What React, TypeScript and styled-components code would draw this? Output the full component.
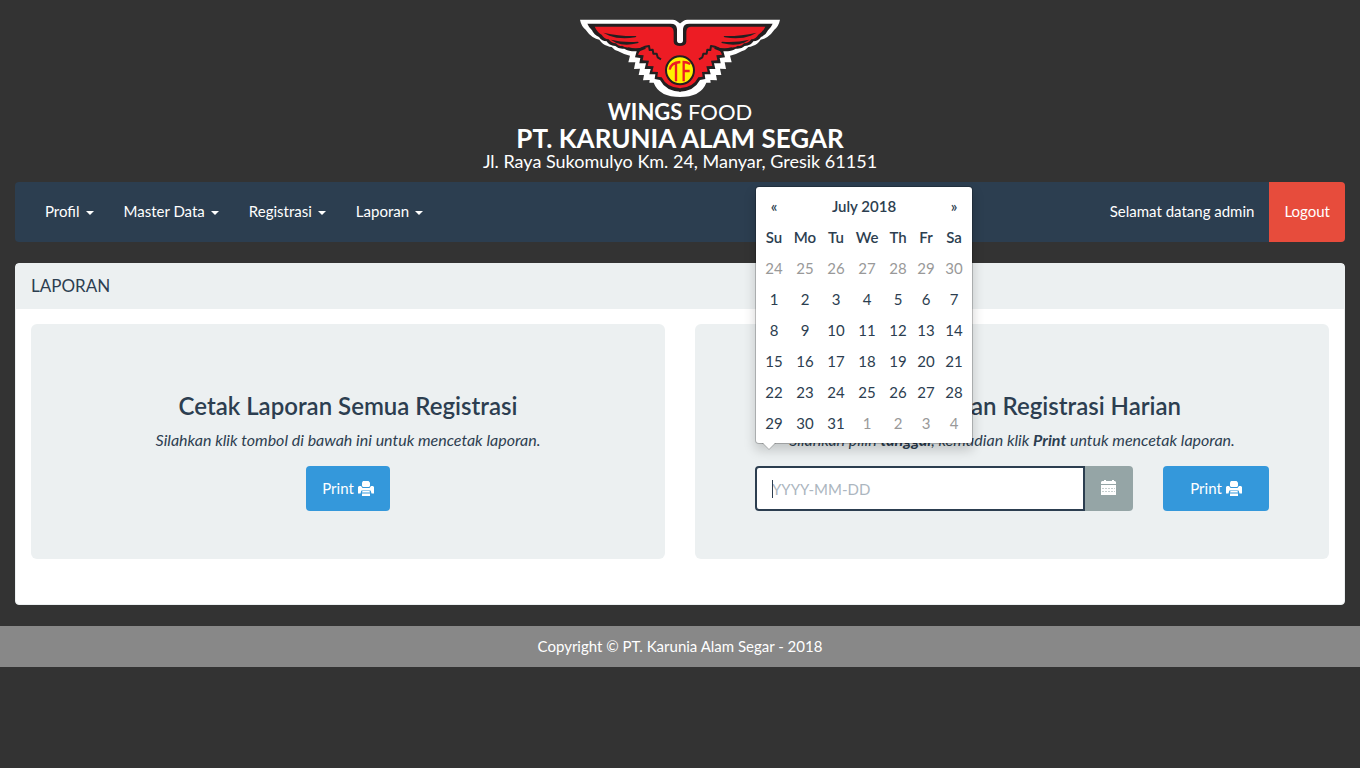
import React from "react";
import styled, { createGlobalStyle } from "styled-components";

const navy = "#2c3e50";
const pale = "#ecf0f1";

const GlobalStyle = createGlobalStyle`
  *, *::before, *::after { box-sizing: border-box; }
  body {
    margin: 0;
    background: #333333;
    color: ${navy};
    font-family: Lato, "Liberation Sans", sans-serif;
    font-size: 15px;
    line-height: 21px;
  }
`;

const Container = styled.div`
  padding: 0 15px;
`;

const Header = styled.header`
  display: flex;
  flex-direction: column;
  align-items: center;
  padding: 19px 0 11px;
  color: #ffffff;
  text-align: center;
`;

const Brand = styled.div`
  font-size: 22px;
  line-height: 29px;
`;

const Company = styled.h1`
  margin: 0;
  font-size: 26px;
  font-weight: 700;
  line-height: 25px;
`;

const Address = styled.p`
  margin: 0;
  font-size: 18px;
  line-height: 20px;
`;

const Navbar = styled.nav`
  display: flex;
  justify-content: space-between;
  margin-bottom: 21px;
  padding-left: 15px;
  border-radius: 4px;
  background: ${navy};
  overflow: hidden;
`;

const NavGroup = styled.ul`
  display: flex;
  margin: 0;
  padding: 0;
  list-style: none;
`;

const NavLink = styled.a<{ $danger?: boolean }>`
  display: flex;
  align-items: center;
  gap: 6px;
  height: 60px;
  padding: 0 15px 2px;
  background: ${(p) => (p.$danger ? "#e74c3c" : "transparent")};
  color: #ffffff;
  text-decoration: none;
`;

const Caret = styled.span`
  margin-top: 4px;
  border-top: 4px solid currentColor;
  border-right: 4px solid transparent;
  border-left: 4px solid transparent;
`;

const Panel = styled.section`
  margin-bottom: 21px;
  border: 1px solid ${pale};
  border-radius: 4px;
  background: #ffffff;
`;

const PanelTitle = styled.h2`
  margin: 0;
  padding: 11px 15px 13px;
  background: ${pale};
  font-size: 17px;
  font-weight: 400;
  line-height: 21px;
`;

const PanelBody = styled.div`
  display: grid;
  grid-template-columns: repeat(2, minmax(0, 1fr));
  gap: 30px;
  padding: 15px 15px 45px;
`;

const Card = styled.section`
  padding: 69px 60px 48px;
  border-radius: 6px;
  background: ${pale};
  text-align: center;
`;

const CardTitle = styled.h3`
  margin: 0 0 10px;
  font-size: 24px;
  font-weight: 600;
  line-height: 26px;
`;

const Hint = styled.p`
  margin: 0 0 16px;
  font-size: 16px;
  font-style: italic;
`;

const PrintButton = styled.button`
  display: inline-flex;
  align-items: center;
  justify-content: center;
  gap: 4px;
  height: 45px;
  padding: 0 16px;
  border: 0;
  border-radius: 4px;
  background: #3498db;
  color: #ffffff;
  font: inherit;
  vertical-align: top;
`;

const FormRow = styled.form`
  display: grid;
  grid-template-columns: repeat(4, minmax(0, 1fr));
  gap: 30px;
`;

const DateGroup = styled.div`
  position: relative;
  display: flex;
  grid-column: span 3;
`;

const DateInput = styled.input`
  flex: 1;
  min-width: 0;
  height: 45px;
  padding: 0 15px;
  border: 2px solid ${navy};
  border-radius: 4px 0 0 4px;
  outline: 0;
  background: #ffffff;
  color: ${navy};
  font: inherit;
  &::placeholder { color: #acb6c0; opacity: 1; }
`;

const TextCursor = styled.span`
  position: absolute;
  top: 14px;
  left: 17px;
  width: 1px;
  height: 18px;
  background: ${navy};
`;

const Addon = styled.button`
  display: flex;
  align-items: center;
  justify-content: center;
  width: 48px;
  padding: 0 0 2px;
  border: 0;
  border-radius: 0 4px 4px 0;
  background: #95a5a6;
  color: #ffffff;
`;

const Picker = styled.div`
  position: absolute;
  bottom: calc(100% + 22px);
  left: 0;
  padding: 4px;
  border: 1px solid rgba(0, 0, 0, 0.2);
  border-radius: 4px;
  background: #ffffff;
  background-clip: padding-box;
  box-shadow: 0 6px 12px rgba(0, 0, 0, 0.18);
  &::before, &::after {
    content: "";
    position: absolute;
    top: 100%;
    left: 6px;
    border-top: 7px solid rgba(0, 0, 0, 0.2);
    border-right: 7px solid transparent;
    border-left: 7px solid transparent;
  }
  &::after {
    left: 7px;
    border-width: 6px 6px 0;
    border-top-color: #ffffff;
  }
`;

const Calendar = styled.table`
  border-collapse: collapse;
  th, td {
    height: 31px;
    padding: 0 5px;
    text-align: center;
  }
  th { font-weight: 600; }
`;

const DayColumn = styled.col<{ $wide: boolean }>`
  width: ${(p) => (p.$wide ? 34 : 28)}px;
`;

const Day = styled.td<{ $outside: boolean }>`
  color: ${(p) => (p.$outside ? "#999999" : navy)};
`;

const Step = styled.button`
  padding: 0;
  border: 0;
  background: none;
  color: inherit;
  font: inherit;
`;

const Footer = styled.footer`
  padding: 10px 15px;
  background: #888888;
  color: #ffffff;
  text-align: center;
`;

const Mirrored = ({ children }: { children: React.ReactNode }) => (
  <>
    {children}
    <g transform="translate(660 0) scale(-1 1)">{children}</g>
  </>
);

const Logo = () => (
  <svg width="200" height="78" viewBox="30 28 600 234" role="img" aria-label="Wings Food">
    <Mirrored>
      <path fill="#fff" d="M332 43L320 34Q315 30 308 30H30Q34 50 47 60Q57 75 68 82Q78 89 88 90Q98 105 111 108Q118 112 125 112Q132 121 145 125Q160 134 180 138L175 158L196 158L192 178L210 177L206 196L222 196L219 212L239 211L238 219H251Q267 262 332 262Z" />
    </Mirrored>
    <Mirrored>
      <path fill="#231f20" d="M52 42H302Q320 42 321 58V93Q322 101 332 101V246Q288 245 270 211L254 208L256 194L238 194L242 178L224 178L228 161L208 161L211 145L195 143L200 125Q177 126 163 117Q146 119 136 109Q116 107 110 95Q96 95 87 82Q72 76 66 62Q57 54 52 42Z" />
    </Mirrored>
    <Mirrored>
      <path fill="#ed1c24" d="M74 51H298Q311 52 311 68V96Q312 109 332 109V236Q291 235 275 203L262 201L264 187L247 186L251 170L233 169L237 153L218 152L221 137L204 135L209 125L228 117L222 112Q197 119 176 113Q164 114 156 108Q146 111 138 101Q124 101 116 89Q102 87 95 75Q83 69 74 51Z" />
    </Mirrored>
    <Mirrored>
      <g fill="#231f20">
        <path d="M100 69Q150 80 197 79Q202 81 196 83Q150 90 118 78Z" />
        <path d="M122 90Q165 100 203 96Q209 98 202 101Q164 110 138 99Z" />
      </g>
      <path fill="none" stroke="#231f20" strokeWidth="6" strokeLinejoin="round" d="M203 127Q212 112 237 109L239 121L248 120L250 132L260 132L263 143L273 149" />
    </Mirrored>
    <circle cx="330" cy="182" r="42" fill="#fff200" stroke="#231f20" strokeWidth="6" />
    <g fill="none" stroke="#ed1c24" strokeWidth="7">
      <path d="M299 180Q302 159 331 157M318 157V215" />
      <path d="M361 163Q350 157 341 157V215M341 184H359" />
    </g>
  </svg>
);

const PrinterIcon = () => (
  <svg width="16" height="15" viewBox="0 0 16 15" fill="currentColor" aria-hidden="true">
    <path d="M5 0h5.500L12 1.500V5l-1 1H5L4 5V1.500z" />
    <path d="M0 6l1-1h2l1.500 2h7L13 5h2l1 1v6.500h-2.500L12.500 9h-9l-1 3.500H0z" />
    <path d="M4.500 10h7l.5 1.500H4zM4 12.500h8V15H4z" />
    <path d="M3 8.500h10v1H3z" />
  </svg>
);

const CalendarIcon = () => (
  <svg width="16" height="16" viewBox="0 0 16 16" aria-hidden="true">
    <path fill="currentColor" d="M1 1h2V0h2v1h6V0h2v1h1l1 1v2H0V2zM0 5h15v10H0z" />
    <path
      fill="none"
      stroke="#95a5a6"
      strokeOpacity=".55"
      strokeDasharray="2 1"
      d="M1 8.500h13M1 11.500h13"
    />
  </svg>
);

const menus = ["Profil", "Master Data", "Registrasi", "Laporan"];
const weekdays = ["Su", "Mo", "Tu", "We", "Th", "Fr", "Sa"];

const weeks = Array.from({ length: 6 }, (_, week) =>
  weekdays.map((_, i) => {
    const date = new Date(2018, 5, 24 + week * 7 + i);
    return { day: date.getDate(), outside: date.getMonth() !== 6 };
  })
);

const DatePicker = () => (
  <Picker>
    <Calendar>
      <colgroup>
        {weekdays.map((name) => (
          <DayColumn key={name} $wide={name === "Mo" || name === "We"} />
        ))}
      </colgroup>
      <thead>
        <tr>
          <th><Step type="button" aria-label="Previous month">«</Step></th>
          <th colSpan={5}>July 2018</th>
          <th><Step type="button" aria-label="Next month">»</Step></th>
        </tr>
        <tr>
          {weekdays.map((name) => <th key={name} scope="col">{name}</th>)}
        </tr>
      </thead>
      <tbody>
        {weeks.map((week, i) => (
          <tr key={i}>
            {week.map((d) => <Day key={d.day} $outside={d.outside}>{d.day}</Day>)}
          </tr>
        ))}
      </tbody>
    </Calendar>
  </Picker>
);

export default function App() {
  return (
    <>
      <GlobalStyle />
      <Container>
        <Header>
          <Logo />
          <Brand><b>WINGS</b> FOOD</Brand>
          <Company>PT. KARUNIA ALAM SEGAR</Company>
          <Address>Jl. Raya Sukomulyo Km. 24, Manyar, Gresik 61151</Address>
        </Header>
        <Navbar>
          <NavGroup>
            {menus.map((name) => (
              <li key={name}>
                <NavLink href="#">{name}<Caret /></NavLink>
              </li>
            ))}
          </NavGroup>
          <NavGroup>
            <li><NavLink href="#">Selamat datang admin</NavLink></li>
            <li><NavLink href="#" $danger>Logout</NavLink></li>
          </NavGroup>
        </Navbar>
        <Panel>
          <PanelTitle>LAPORAN</PanelTitle>
          <PanelBody>
            <Card>
              <CardTitle>Cetak Laporan Semua Registrasi</CardTitle>
              <Hint>Silahkan klik tombol di bawah ini untuk mencetak laporan.</Hint>
              <PrintButton type="button">Print<PrinterIcon /></PrintButton>
            </Card>
            <Card>
              <CardTitle>Cetak Laporan Registrasi Harian</CardTitle>
              <Hint>
                Silahkan pilih <b>tanggal</b>, kemudian klik <b>Print</b> untuk mencetak laporan.
              </Hint>
              <FormRow>
                <DateGroup>
                  <DateInput type="text" placeholder="YYYY-MM-DD" aria-label="Tanggal" />
                  <TextCursor />
                  <Addon type="button" aria-label="Pilih tanggal"><CalendarIcon /></Addon>
                  <DatePicker />
                </DateGroup>
                <PrintButton type="button">Print<PrinterIcon /></PrintButton>
              </FormRow>
            </Card>
          </PanelBody>
        </Panel>
      </Container>
      <Footer>Copyright © PT. Karunia Alam Segar - 2018</Footer>
    </>
  );
}
